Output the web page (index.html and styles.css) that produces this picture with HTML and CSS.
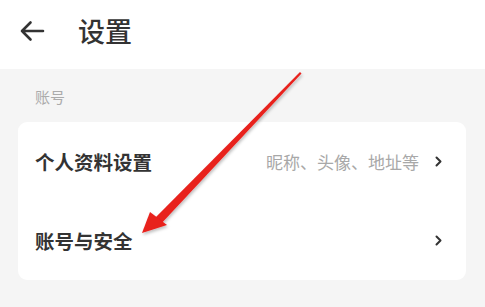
FILE: index.html
```html
<!DOCTYPE html>
<html lang="zh-CN">
<head>
  <meta charset="UTF-8">
  <meta name="viewport" content="width=device-width, initial-scale=1.0">
  <title>设置</title>
  <link rel="stylesheet" href="styles.css">
</head>
<body>
  <div class="header">
    <svg class="back" width="26" height="22" viewBox="0 0 26 22">
      <path d="M24 11H3M11.5 2.5L3 11l8.5 8.5" fill="none" stroke="#333" stroke-width="2.6" stroke-linecap="round" stroke-linejoin="round"/>
    </svg>
    <h1 class="title">设置</h1>
  </div>

  <div class="content">
    <div class="section-label">账号</div>
    <div class="card">
      <div class="row">
        <span class="row-title">个人资料设置</span>
        <span class="row-hint">昵称、头像、地址等</span>
        <svg class="chevron" width="7" height="11" viewBox="0 0 7 11">
          <path d="M1.5 1.5L5.5 5.5 1.5 9.5" fill="none" stroke="#333" stroke-width="2" stroke-linecap="round" stroke-linejoin="round"/>
        </svg>
      </div>
      <div class="row">
        <span class="row-title">账号与安全</span>
        <svg class="chevron" width="7" height="11" viewBox="0 0 7 11">
          <path d="M1.5 1.5L5.5 5.5 1.5 9.5" fill="none" stroke="#333" stroke-width="2" stroke-linecap="round" stroke-linejoin="round"/>
        </svg>
      </div>
    </div>
  </div>

  <!-- red annotation arrow -->
  <svg class="annotation" width="485" height="307" viewBox="0 0 485 307">
    <defs>
      <filter id="shadow" x="-20%" y="-20%" width="140%" height="140%">
        <feDropShadow dx="1" dy="2" stdDeviation="1.5" flood-color="#000" flood-opacity="0.25"/>
      </filter>
    </defs>
    <g filter="url(#shadow)">
      <polygon points="300,72 301.5,73.5 159,226 153,220" fill="#e8201e"/>
      <polygon points="142,233 150,212 167,225" fill="#e8201e"/>
    </g>
  </svg>
</body>
</html>
```

FILE: styles.css
```css
* {
  margin: 0;
  padding: 0;
  box-sizing: border-box;
}

body {
  width: 485px;
  height: 307px;
  overflow: hidden;
  background: #f5f5f5;
  font-family: "Noto Sans CJK SC", "Noto Sans", sans-serif;
  position: relative;
}

/* Header */
.header {
  height: 69px;
  background: #ffffff;
  display: flex;
  align-items: center;
  padding-left: 19px;
  padding-bottom: 8px;
}

.back {
  display: block;
}

.title {
  margin-left: 33px;
  font-size: 27px;
  font-weight: 500;
  color: #333333;
  line-height: 1;
}

/* Content */
.content {
  padding: 0 19px 0 18px;
}

.section-label {
  padding: 17px 0 14px 17px;
  font-size: 15px;
  line-height: 22px;
  color: #ababab;
}

.card {
  background: #ffffff;
  border-radius: 9px;
}

.row {
  height: 79px;
  display: flex;
  align-items: center;
  padding: 0 24px 0 17px;
}

.row-title {
  font-size: 19.5px;
  font-weight: bold;
  color: #333333;
  flex: 1;
}

.row-hint {
  font-size: 17px;
  color: #a8a8a8;
  margin-right: 16px;
}

.chevron {
  display: block;
}

/* Annotation overlay */
.annotation {
  position: absolute;
  left: 0;
  top: 0;
  pointer-events: none;
}
```
